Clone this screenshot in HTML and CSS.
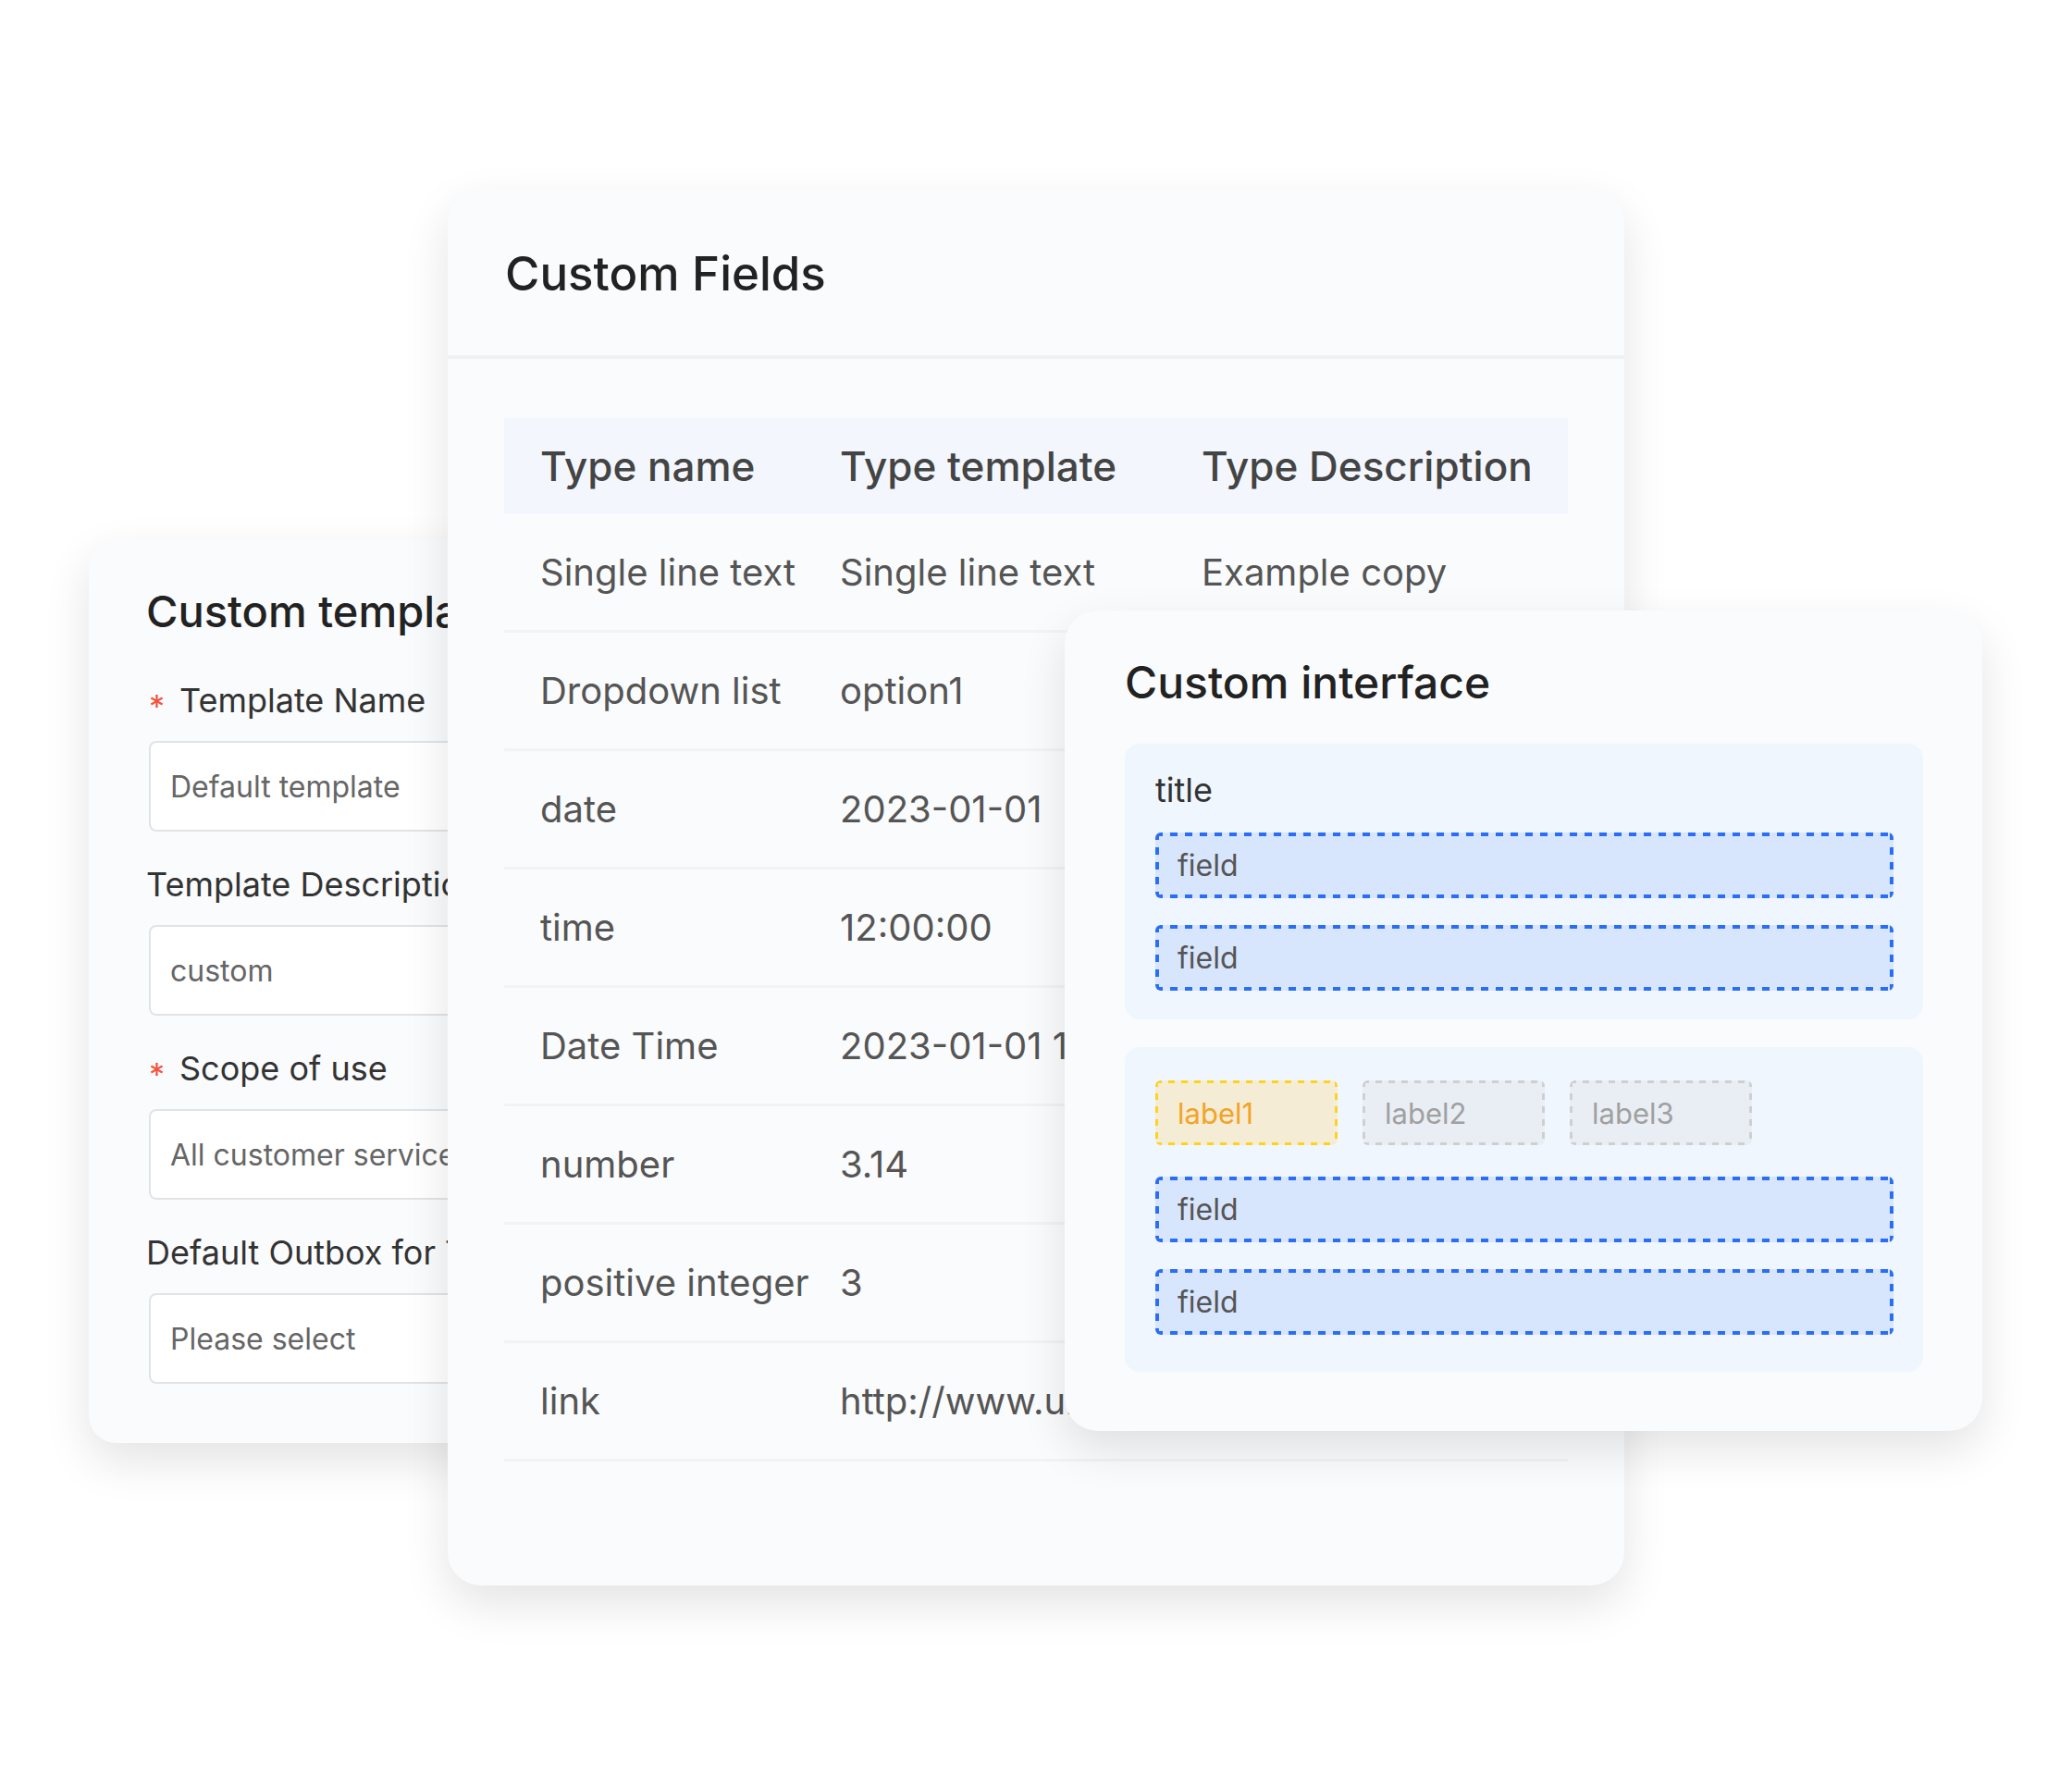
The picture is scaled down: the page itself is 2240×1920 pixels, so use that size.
FILE: index.html
```html
<!DOCTYPE html>
<html lang="en">
<head>
<meta charset="UTF-8">
<meta name="viewport" content="width=device-width, initial-scale=1.0">
<title>Custom Fields</title>

<link rel="stylesheet" href="styles.css">
</head>
<body>

<div class="stage">

    <!-- template form, mostly covered by the fields card -->
    <section class="card template-card">
        <h2 class="card-title">Custom template</h2>
        <div class="form-item">
            <label class="form-label"><span class="required">*</span>Template Name</label>
            <div class="form-input">Default template</div>
        </div>
        <div class="form-item">
            <label class="form-label">Template Description</label>
            <div class="form-input">custom</div>
        </div>
        <div class="form-item">
            <label class="form-label"><span class="required">*</span>Scope of use</label>
            <div class="form-input">All customer service</div>
        </div>
        <div class="form-item">
            <label class="form-label">Default Outbox for Tickets</label>
            <div class="form-input">Please select</div>
        </div>
    </section>

    <section class="card fields-card">
        <div class="card-head">
            <h2 class="card-title">Custom Fields</h2>
        </div>
        <div class="field-table">
            <div class="table-row table-head">
                <span>Type name</span><span>Type template</span><span>Type Description</span>
            </div>
            <div class="table-row"><span>Single line text</span><span>Single line text</span><span>Example copy</span></div>
            <div class="table-row"><span>Dropdown list</span><span>option1</span><span></span></div>
            <div class="table-row"><span>date</span><span>2023-01-01</span><span></span></div>
            <div class="table-row"><span>time</span><span>12:00:00</span><span></span></div>
            <div class="table-row"><span>Date Time</span><span>2023-01-01 12:00:00</span><span></span></div>
            <div class="table-row"><span>number</span><span>3.14</span><span></span></div>
            <div class="table-row"><span>positive integer</span><span>3</span><span></span></div>
            <div class="table-row"><span>link</span><span>http://www.url.com</span><span></span></div>
        </div>
    </section>

    <section class="card interface-card">
        <h2 class="card-title">Custom interface</h2>
        <div class="panel">
            <div class="panel-title">title</div>
            <div class="dash-box field-box">field</div>
            <div class="dash-box field-box">field</div>
        </div>
        <div class="panel panel-tags">
            <div class="tag-list">
                <span class="dash-box tag tag-active">label1</span>
                <span class="dash-box tag">label2</span>
                <span class="dash-box tag">label3</span>
            </div>
            <div class="dash-box field-box">field</div>
            <div class="dash-box field-box">field</div>
        </div>
    </section>

</div>

</body>
</html>
```

FILE: styles.css
```css
body {
    margin: 0;
    background-color: #fff;
    font-family: Inter, "Liberation Sans", sans-serif;
}

.stage {
    position: relative;
    width: 2240px;
    height: 1920px;
    overflow: hidden;
}

/* floating cards */
.card {
    position: absolute;
    box-sizing: border-box;
    background-color: #fafbfd;
    border-radius: 36px;
    box-shadow: 0 20px 50px rgba(0, 0, 0, 0.11);
}

.card-title {
    margin: 0;
    font-size: 47px;
    font-weight: 500;
    line-height: 56px;
    color: #222;
    white-space: nowrap;
}

/* left: template form */
.template-card {
    left: 96px;
    top: 583px;
    width: 720px;
    height: 977px;
    padding: 50px 0 0 62px;
    border-radius: 30px;
}

.template-card .card-title {
    margin-bottom: 46px;
}

.form-item {
    margin-bottom: 35px;
}

.form-label {
    display: flex;
    align-items: center;
    height: 44px;
    margin-bottom: 22px;
    font-size: 36px;
    color: #333;
    white-space: nowrap;
}

.required {
    width: 33px;
    margin-left: 3px;
    font-size: 34px;
    color: #f4523b;
    position: relative;
    top: 6px;
}

.form-input {
    display: flex;
    align-items: center;
    height: 98px;
    margin-left: 3px;
    padding-left: 21px;
    box-sizing: border-box;
    background-color: #fff;
    border: 2px solid #e2e3e6;
    border-radius: 8px;
    font-size: 32px;
    color: #666;
    white-space: nowrap;
}

/* middle: fields table */
.fields-card {
    left: 484px;
    top: 204px;
    width: 1272px;
    height: 1510px;
}

.fields-card .card-title {
    font-size: 51px;
}

.card-head {
    display: flex;
    align-items: center;
    height: 184px;
    padding: 4px 62px 0;
    box-sizing: border-box;
    border-bottom: 4px solid #f0f1f3;
}

.field-table {
    margin: 64px 61px 0;
}

.table-row {
    display: grid;
    grid-template-columns: 324px 391px 1fr;
    align-items: center;
    height: 128px;
    padding-left: 39px;
    box-sizing: border-box;
    border-bottom: 3px solid #f2f3f5;
    font-size: 40px;
    color: #555;
    white-space: nowrap;
}

.table-head {
    height: 104px;
    background-color: #f3f7fd;
    border-bottom: none;
    font-size: 44px;
    font-weight: 500;
    color: #444;
}

/* right: interface preview */
.interface-card {
    left: 1151px;
    top: 660px;
    width: 992px;
    height: 887px;
    padding: 50px 64px 0 65px;
}

.interface-card .card-title {
    margin-bottom: 38px;
    font-size: 48px;
}

.panel {
    padding: 30px 32px 31px 33px;
    background-color: #eff6fe;
    border-radius: 16px;
}

.panel + .panel {
    margin-top: 30px;
}

.panel-tags {
    padding-top: 36px;
    padding-bottom: 40px;
}

.panel-title {
    margin-bottom: 26px;
    font-size: 36px;
    line-height: 40px;
    color: #333;
}

/* dashed outlines drawn with gradients so the dash length can be set */
.dash-box {
    --dash: #2a6ef6;
    --fill: #d7e5fd;
    --w: 4px;
    --len: 16px;
    background:
        linear-gradient(90deg, var(--dash) 50%, transparent 50%) left top / var(--len) var(--w) repeat-x,
        linear-gradient(90deg, var(--dash) 50%, transparent 50%) left bottom / var(--len) var(--w) repeat-x,
        linear-gradient(180deg, var(--dash) 50%, transparent 50%) left top / var(--w) var(--len) repeat-y,
        linear-gradient(180deg, var(--dash) 50%, transparent 50%) right top / var(--w) var(--len) repeat-y,
        var(--fill);
}

.field-box {
    display: flex;
    align-items: center;
    height: 71px;
    padding-left: 24px;
    box-sizing: border-box;
    border-radius: 6px;
    font-size: 32px;
    color: #555;
}

.field-box + .field-box {
    margin-top: 29px;
}

.tag-list {
    display: flex;
    gap: 27px;
    margin-bottom: 34px;
}

.tag {
    --dash: #cfcfcf;
    --fill: #e9eef4;
    --w: 3px;
    --len: 14px;
    display: flex;
    align-items: center;
    width: 197px;
    height: 70px;
    padding-left: 24px;
    box-sizing: border-box;
    border-radius: 6px;
    font-size: 31px;
    color: #a0a0a0;
}

.tag-active {
    --dash: #fdd31c;
    --fill: #f5ecd5;
    color: #f3a327;
}
```
